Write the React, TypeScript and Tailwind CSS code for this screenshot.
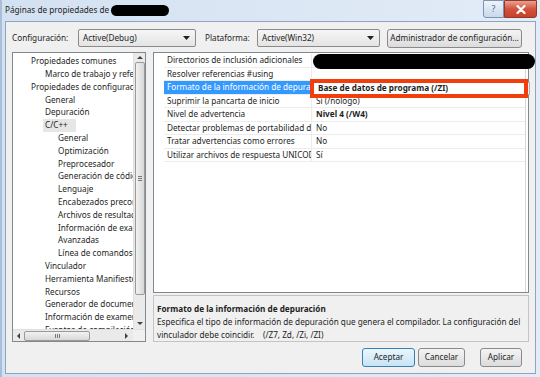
import React from 'react';

const treeItems: [string, number][] = [
  ['Propiedades comunes', 0],
  ['Marco de trabajo y referencias', 1],
  ['Propiedades de configuración', 0],
  ['General', 1],
  ['Depuración', 1],
  ['C/C++', 1],
  ['General', 2],
  ['Optimización', 2],
  ['Preprocesador', 2],
  ['Generación de código', 2],
  ['Lenguaje', 2],
  ['Encabezados precompilados', 2],
  ['Archivos de resultados', 2],
  ['Información de examen', 2],
  ['Avanzadas', 2],
  ['Línea de comandos', 2],
  ['Vinculador', 1],
  ['Herramienta Manifiesto', 1],
  ['Recursos', 1],
  ['Generador de documentos XML', 1],
  ['Información de examen', 1],
  ['Eventos de compilación', 1],
];

const props: { name: string; value: string; bold?: boolean }[] = [
  { name: 'Directorios de inclusión adicionales', value: '' },
  { name: 'Resolver referencias #using', value: '' },
  { name: 'Formato de la información de depuración', value: '' },
  { name: 'Suprimir la pancarta de inicio', value: 'Sí (/nologo)' },
  { name: 'Nivel de advertencia', value: 'Nivel 4 (/W4)', bold: true },
  { name: 'Detectar problemas de portabilidad de 64 bits', value: 'No' },
  { name: 'Tratar advertencias como errores', value: 'No' },
  { name: 'Utilizar archivos de respuesta UNICODE', value: 'Sí' },
];

const indent = ['pl-[18px]', 'pl-[32px]', 'pl-[45px]'];

const Arrow = ({ dir }: { dir: 'up' | 'down' | 'left' | 'right' }) => {
  const pts = {
    up: '1,5 4,2 7,5',
    down: '1,2 4,5 7,2',
    left: '5,1 2,4 5,7',
    right: '2,1 5,4 2,7',
  }[dir];
  return (
    <svg width="8" height="8" viewBox="0 0 8 8">
      <polygon points={pts} fill="#404040" />
    </svg>
  );
};

const Combo = ({ text, w }: { text: string; w: string }) => (
  <div className={`${w} h-[18px] flex items-center justify-between pl-[4px] pr-[5px] border border-[#8a8a8a] rounded-[2px] bg-gradient-to-b from-[#f6f6f6] to-[#e4e4e4]`}>
    <span>{text}</span>
    <svg width="7" height="4" viewBox="0 0 7 4">
      <polygon points="0,0 7,0 3.5,4" fill="#222" />
    </svg>
  </div>
);

const Btn = ({ text, w, focus }: { text: string; w: string; focus?: boolean }) => (
  <div
    className={`${w} h-[19px] flex items-center justify-center rounded-[3px] border ${
      focus
        ? 'border-[#3c7fb1] bg-gradient-to-b from-[#eaf6fd] to-[#c6e4f5]'
        : 'border-[#8a8a8a] bg-gradient-to-b from-[#f4f4f4] to-[#dcdcdc]'
    }`}
  >
    {text}
  </div>
);

export default function App() {
  return (
    <div
      className="w-[540px] h-[377px] flex flex-col bg-gradient-to-r from-[#d3e1f1] to-[#e3ecf7] border-l-[2px] border-[#a9bfd9] text-[8.2px] text-[#1e1e1e] overflow-hidden"
      style={{ fontFamily: '"Noto Sans", "Open Sans", sans-serif' }}
    >
      {/* Title bar */}
      <div className="h-[21px] flex items-start shrink-0">
        <div className="flex items-center h-[20px] pl-[3px] text-[#1e1e1e]">
          <span>Páginas de propiedades de</span>
          <div className="ml-[2px] w-[58px] h-[11px] rounded-full bg-black" />
        </div>
        <div className="ml-auto flex">
          <div className="w-[21px] h-[18px] flex items-center justify-center border border-[#7d93b3] rounded-bl-[3px] bg-gradient-to-b from-[#eef3fa] to-[#c9d8eb] text-[#4c6a92] text-[9px]">
            ?
          </div>
          <div className="w-[33px] h-[18px] flex items-center justify-center border border-[#8b3b2c] rounded-br-[3px] bg-gradient-to-b from-[#e9a08f] via-[#d2533c] to-[#c8402a]">
            <svg width="10" height="9" viewBox="0 0 10 9">
              <path d="M1.5 1 L8.5 8 M8.5 1 L1.5 8" stroke="#fff" strokeWidth="2.2" strokeLinecap="round" />
            </svg>
          </div>
          <div className="w-[3px]" />
        </div>
      </div>

      {/* Client area */}
      <div className="flex-1 mr-[4px] mb-[3px] ml-[3px] border border-[#8ea4c1] bg-[#f0f0f0] flex flex-col px-[6px]">
        {/* Config row */}
        <div className="mt-[7px] h-[18px] flex items-center shrink-0">
          <span className="w-[66px]">Configuración:</span>
          <Combo text="Active(Debug)" w="w-[118px]" />
          <span className="ml-[9px] w-[52px]">Plataforma:</span>
          <Combo text="Active(Win32)" w="w-[123px]" />
          <div className="ml-[7px]">
            <Btn text="Administrador de configuración..." w="w-[135px]" />
          </div>
        </div>

        {/* Main */}
        <div className="mt-[5px] flex gap-[7px] h-[290px] shrink-0">
          {/* Tree */}
          <div className="w-[134px] border border-[#828790] bg-white flex flex-col">
            <div className="flex flex-1 min-h-0">
              <div className="flex-1 overflow-hidden pt-[2px]">
                {treeItems.map(([t, l], i) => (
                  <div key={i} className={`h-[12.8px] flex items-center whitespace-nowrap ${indent[l]}`}>
                    <span className={t === 'C/C++' ? 'bg-[#e6e6e6] -ml-[2px] px-[2px] pr-[8px]' : ''}>{t}</span>
                  </div>
                ))}
              </div>
              <div className="w-[12px] bg-[#eaeaea] border-l border-[#e0e0e0] flex flex-col items-center">
                <div className="h-[9px] flex items-center justify-center">
                  <Arrow dir="up" />
                </div>
                <div className="w-[10px] h-[233px] rounded-[2px] border border-[#9a9a9a] bg-gradient-to-r from-[#f2f2f2] to-[#d8d8d8] flex items-center justify-center">
                  <div className="flex flex-col gap-[1px]">
                    <div className="w-[4px] h-px bg-[#777]" />
                    <div className="w-[4px] h-px bg-[#777]" />
                    <div className="w-[4px] h-px bg-[#777]" />
                  </div>
                </div>
                <div className="flex-1" />
                <div className="h-[10px] flex items-center justify-center">
                  <Arrow dir="down" />
                </div>
              </div>
            </div>
            <div className="h-[12px] flex bg-[#eaeaea] border-t border-[#e0e0e0]">
              <div className="w-[11px] flex items-center justify-center">
                <Arrow dir="left" />
              </div>
              <div className="w-[66px] h-[10px] mt-[1px] rounded-[2px] border border-[#9a9a9a] bg-gradient-to-b from-[#f2f2f2] to-[#d8d8d8] flex items-center justify-center gap-[1px]">
                <div className="w-px h-[4px] bg-[#777]" />
                <div className="w-px h-[4px] bg-[#777]" />
                <div className="w-px h-[4px] bg-[#777]" />
              </div>
              <div className="flex-1" />
              <div className="w-[12px] flex items-center justify-center">
                <Arrow dir="right" />
              </div>
              <div className="w-[12px] bg-[#f0f0f0]" />
            </div>
          </div>

          {/* Right column */}
          <div className="flex-1 flex flex-col">
            <div className="relative h-[244px] border border-[#828790] bg-white pl-[10px] pt-[1px] pr-[2px]">
              <div className="border-r border-[#d8d8d8] h-full">
                {props.map((p, i) => (
                  <div key={i} className="h-[13.5px] flex border-b border-[#ececec]">
                    <div
                      className={`w-[148px] shrink-0 overflow-hidden whitespace-nowrap flex items-center pl-[3px] border-r border-[#ececec] ${
                        i === 2 ? 'bg-[#3399ff] text-white' : ''
                      }`}
                    >
                      {p.name}
                    </div>
                    <div className={`flex-1 flex items-center pl-[4px] whitespace-nowrap ${p.bold ? 'font-bold' : ''}`}>
                      {p.value}
                    </div>
                  </div>
                ))}
              </div>
              {/* redaction */}
              <div className="absolute left-[159px] top-[1px] w-[222px] h-[15px] rounded-full bg-black" />
              {/* dropdown button of edited cell */}
              <div className="absolute left-[369px] top-[29px] w-[7px] h-[13px] border border-[#b0b0b0] bg-[#f0f0f0]" />
              {/* highlight box */}
              <div className="absolute left-[156px] top-[26px] w-[218px] h-[19px] border-[4px] border-[#f23d0c] bg-white flex items-center pl-[4px] font-bold">
                Base de datos de programa (/ZI)
              </div>
            </div>
            <div className="mt-[2px] flex-1 border border-[#c4c4c4] bg-[#f0f0f0] px-[3px] pt-[6px] leading-[13px]">
              <div className="font-bold">Formato de la información de depuración</div>
              <div>
                Especifica el tipo de información de depuración que genera el compilador. La configuración del
                vinculador debe coincidir.&nbsp;&nbsp;&nbsp; (/Z7, Zd, /Zi, /ZI)
              </div>
            </div>
          </div>
        </div>

        {/* Buttons */}
        <div className="mt-[6px] flex justify-end pr-[7px]">
          <Btn text="Aceptar" w="w-[53px]" focus />
          <div className="ml-[3px]">
            <Btn text="Cancelar" w="w-[47px]" />
          </div>
          <div className="ml-[15px]">
            <Btn text="Aplicar" w="w-[42px]" />
          </div>
        </div>
      </div>
    </div>
  );
}
